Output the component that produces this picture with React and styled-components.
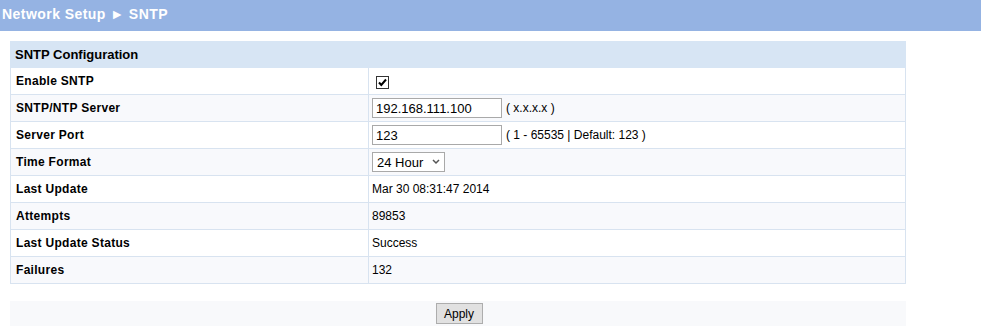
import React from "react";
import styled, { createGlobalStyle } from "styled-components";

const Global = createGlobalStyle`
  html, body { margin: 0; padding: 0; background: #ffffff; }
  body { font-family: "Liberation Sans", Arial, sans-serif; color: #000; }
`;

const TitleBar = styled.div`
  height: 31px;
  background: #95b3e3;
  color: #ffffff;
  font-weight: bold;
  font-size: 14px;
  letter-spacing: 0.45px;
  line-height: 18px;
  padding: 5px 0 0 2px;
  box-sizing: border-box;
`;

const Content = styled.div`
  padding: 10px 0 0 10px;
  width: 896px;
`;

const Table = styled.table`
  width: 896px;
  border-collapse: collapse;
  table-layout: fixed;
  font-size: 12px;
`;

const HeadCell = styled.th`
  background: #d7e5f4;
  height: 26px;
  padding: 0 0 0 4px;
  text-align: left;
  font-size: 13px;
  font-weight: bold;
  border: 1px solid #d7e5f4;
  box-sizing: border-box;
`;

const Row = styled.tr`
  background: ${(p) => (p.$alt ? "#f8f9fc" : "#ffffff")};
`;

const Label = styled.td`
  height: 27px;
  box-sizing: border-box;
  padding: 0 0 0 5px;
  font-weight: bold;
  letter-spacing: 0.3px;
  border: 1px solid #d8e3f0;
`;

const Value = styled.td`
  height: 27px;
  box-sizing: border-box;
  padding: 0 0 0 3px;
  border: 1px solid #d8e3f0;
  white-space: nowrap;
`;

const CheckBox = styled.span`
  display: inline-block;
  width: 11px;
  height: 11px;
  border: 1px solid #333;
  background: #fff;
  margin: 3px 0 0 4px;
  position: relative;
  vertical-align: middle;
  svg { position: absolute; left: 0; top: 0; }
`;

const TextInput = styled.input`
  width: 130px;
  height: 20px;
  box-sizing: border-box;
  border: 1px solid #a9a9a9;
  padding: 0 3px;
  font-family: "Liberation Sans", Arial, sans-serif;
  font-size: 13px;
  color: #000;
  vertical-align: middle;
  margin: 0;
`;

const Hint = styled.span`
  font-size: 12px;
  margin-left: 4px;
  vertical-align: middle;
`;

const SelectWrap = styled.span`
  display: inline-block;
  position: relative;
  vertical-align: middle;
  svg { position: absolute; right: 5px; top: 7px; pointer-events: none; }
`;

const Select = styled.select`
  appearance: none;
  -webkit-appearance: none;
  width: 73px;
  height: 20px;
  box-sizing: border-box;
  border: 1px solid #a9a9a9;
  border-radius: 0;
  background: #fff;
  padding: 0 0 0 4px;
  font-family: "Liberation Sans", Arial, sans-serif;
  font-size: 13px;
  color: #000;
  margin: 0;
`;

const ButtonBar = styled.div`
  margin-top: 17px;
  height: 25px;
  background: #f8f9fb;
  display: flex;
  align-items: center;
  justify-content: center;
  padding-left: 2px;
`;

const Button = styled.button`
  width: 47px;
  height: 21px;
  box-sizing: border-box;
  border: 1px solid #adadad;
  background: #e1e1e1;
  font-family: "Liberation Sans", Arial, sans-serif;
  font-size: 12px;
  color: #000;
  padding: 0;
  margin: 0;
`;

const rows = [
  { label: "Last Update", value: "Mar 30 08:31:47 2014" },
  { label: "Attempts", value: "89853" },
  { label: "Last Update Status", value: "Success" },
  { label: "Failures", value: "132" },
];

export default function App() {
  return (
    <>
      <Global />
      <TitleBar>Network Setup ► SNTP</TitleBar>
      <Content>
        <Table>
          <colgroup>
            <col style={{ width: 358 }} />
            <col />
          </colgroup>
          <thead>
            <tr>
              <HeadCell colSpan={2}>SNTP Configuration</HeadCell>
            </tr>
          </thead>
          <tbody>
            <Row>
              <Label>Enable SNTP</Label>
              <Value>
                <CheckBox>
                  <svg width="11" height="11" viewBox="0 0 11 11">
                    <path d="M2 5.5 L4.3 8 L9 2.5" fill="none" stroke="#000" strokeWidth="2" />
                  </svg>
                </CheckBox>
              </Value>
            </Row>
            <Row $alt>
              <Label>SNTP/NTP Server</Label>
              <Value>
                <TextInput defaultValue="192.168.111.100" />
                <Hint>( x.x.x.x )</Hint>
              </Value>
            </Row>
            <Row>
              <Label>Server Port</Label>
              <Value>
                <TextInput defaultValue="123" />
                <Hint>( 1 - 65535 | Default: 123 )</Hint>
              </Value>
            </Row>
            <Row $alt>
              <Label>Time Format</Label>
              <Value>
                <SelectWrap>
                  <Select defaultValue="24">
                    <option value="24">24 Hour</option>
                    <option value="12">12 Hour</option>
                  </Select>
                  <svg width="8" height="6" viewBox="0 0 8 6">
                    <path d="M1 1 L4 4 L7 1" fill="none" stroke="#555" strokeWidth="1.5" />
                  </svg>
                </SelectWrap>
              </Value>
            </Row>
            {rows.map((r, i) => (
              <Row key={r.label} $alt={i % 2 === 1}>
                <Label>{r.label}</Label>
                <Value>{r.value}</Value>
              </Row>
            ))}
          </tbody>
        </Table>
        <ButtonBar>
          <Button>Apply</Button>
        </ButtonBar>
      </Content>
    </>
  );
}
